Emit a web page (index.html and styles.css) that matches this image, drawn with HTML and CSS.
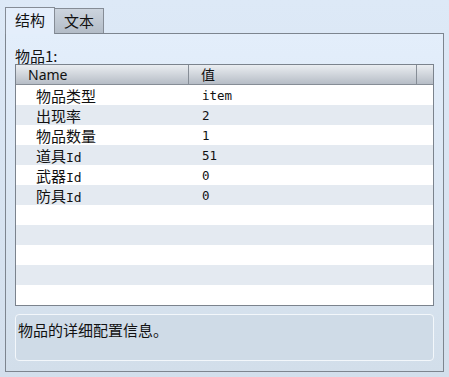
FILE: index.html
```html
<!DOCTYPE html>
<html>

	<head>
		<meta charset="UTF-8">
		<title>物品</title>
		<link rel="stylesheet" href="styles.css">
	</head>

	<body>
		<div class="wrap">
			<div class="tabs">
				<div class="tab active">结构</div>
				<div class="tab">文本</div>
			</div>
			<div class="panel">
				<div class="label">物品1:</div>
				<div class="grid">
					<div class="head">
						<div class="hcell">Name</div>
						<div class="hcell">值</div>
						<div class="hcell"></div>
					</div>
					<div class="row"><div class="key">物品类型</div><div class="val">item</div></div>
					<div class="row"><div class="key">出现率</div><div class="val">2</div></div>
					<div class="row"><div class="key">物品数量</div><div class="val">1</div></div>
					<div class="row"><div class="key">道具<span class="mono">Id</span></div><div class="val">51</div></div>
					<div class="row"><div class="key">武器<span class="mono">Id</span></div><div class="val">0</div></div>
					<div class="row"><div class="key">防具<span class="mono">Id</span></div><div class="val">0</div></div>
					<div class="row"></div>
					<div class="row"></div>
					<div class="row"></div>
					<div class="row"></div>
					<div class="row"></div>
				</div>
				<div class="desc">物品的详细配置信息。</div>
			</div>
		</div>
	</body>

</html>
```

FILE: styles.css
```css
* {
	padding: 0;
	margin: 0;
	box-sizing: border-box;
}

body {
	width: 449px;
	height: 377px;
	background: linear-gradient(#dde9f7, #d3dfec);
	font-family: "Noto Sans CJK SC", sans-serif;
	font-size: 15px;
	color: #111;
}

.wrap {
	padding: 7px 5px 5px 5px;
}

.tabs {
	display: flex;
	height: 26px;
	align-items: flex-end;
}

.tab {
	width: 49px;
	height: 25px;
	border: 1px solid #858c96;
	border-bottom: none;
	border-left: none;
	background: linear-gradient(#ccd4de, #b3bcc7);
	text-align: center;
	line-height: 24px;
}

.tab.active {
	width: 50px;
	height: 27px;
	margin-bottom: -1px;
	border-left: 1px solid #858c96;
	background: #e4eefb;
	position: relative;
	z-index: 2;
}

.panel {
	height: 339px;
	border: 1px solid #7d858f;
	background: linear-gradient(#e3eefb, #d2deea);
	padding: 0 9px;
}

.label {
	padding-top: 14px;
	height: 30px;
	line-height: 16px;
}

.grid {
	height: 242px;
	border: 1px solid #7b838d;
	background: #fff;
}

.head {
	display: grid;
	grid-template-columns: 173px 228px 1fr;
	height: 20px;
	border-bottom: 1px solid #868d96;
	background: linear-gradient(#eaedf1, #b6bdc6);
	font-family: "Noto Sans", "Noto Sans CJK SC", sans-serif;
	font-size: 14px;
	line-height: 19px;
}

.hcell {
	padding-left: 12px;
	border-right: 1px solid #868d96;
}

.hcell:last-child {
	border-right: none;
}

.row {
	display: grid;
	grid-template-columns: 173px 1fr;
	height: 20px;
	line-height: 21px;
}

.row:nth-child(odd) {
	background: #e4eaf1;
}

.key {
	padding-left: 20px;
}

.val {
	padding-left: 13px;
	font-family: "DejaVu Sans Mono", monospace;
	font-size: 12.5px;
}

.mono {
	font-family: "DejaVu Sans Mono", monospace;
	font-size: 13px;
}

.desc {
	margin-top: 8px;
	height: 47px;
	border: 1px solid #f3f7fb;
	border-radius: 4px;
	background: #cfdbe7;
	padding: 5px 2px;
	line-height: 20px;
}
```
